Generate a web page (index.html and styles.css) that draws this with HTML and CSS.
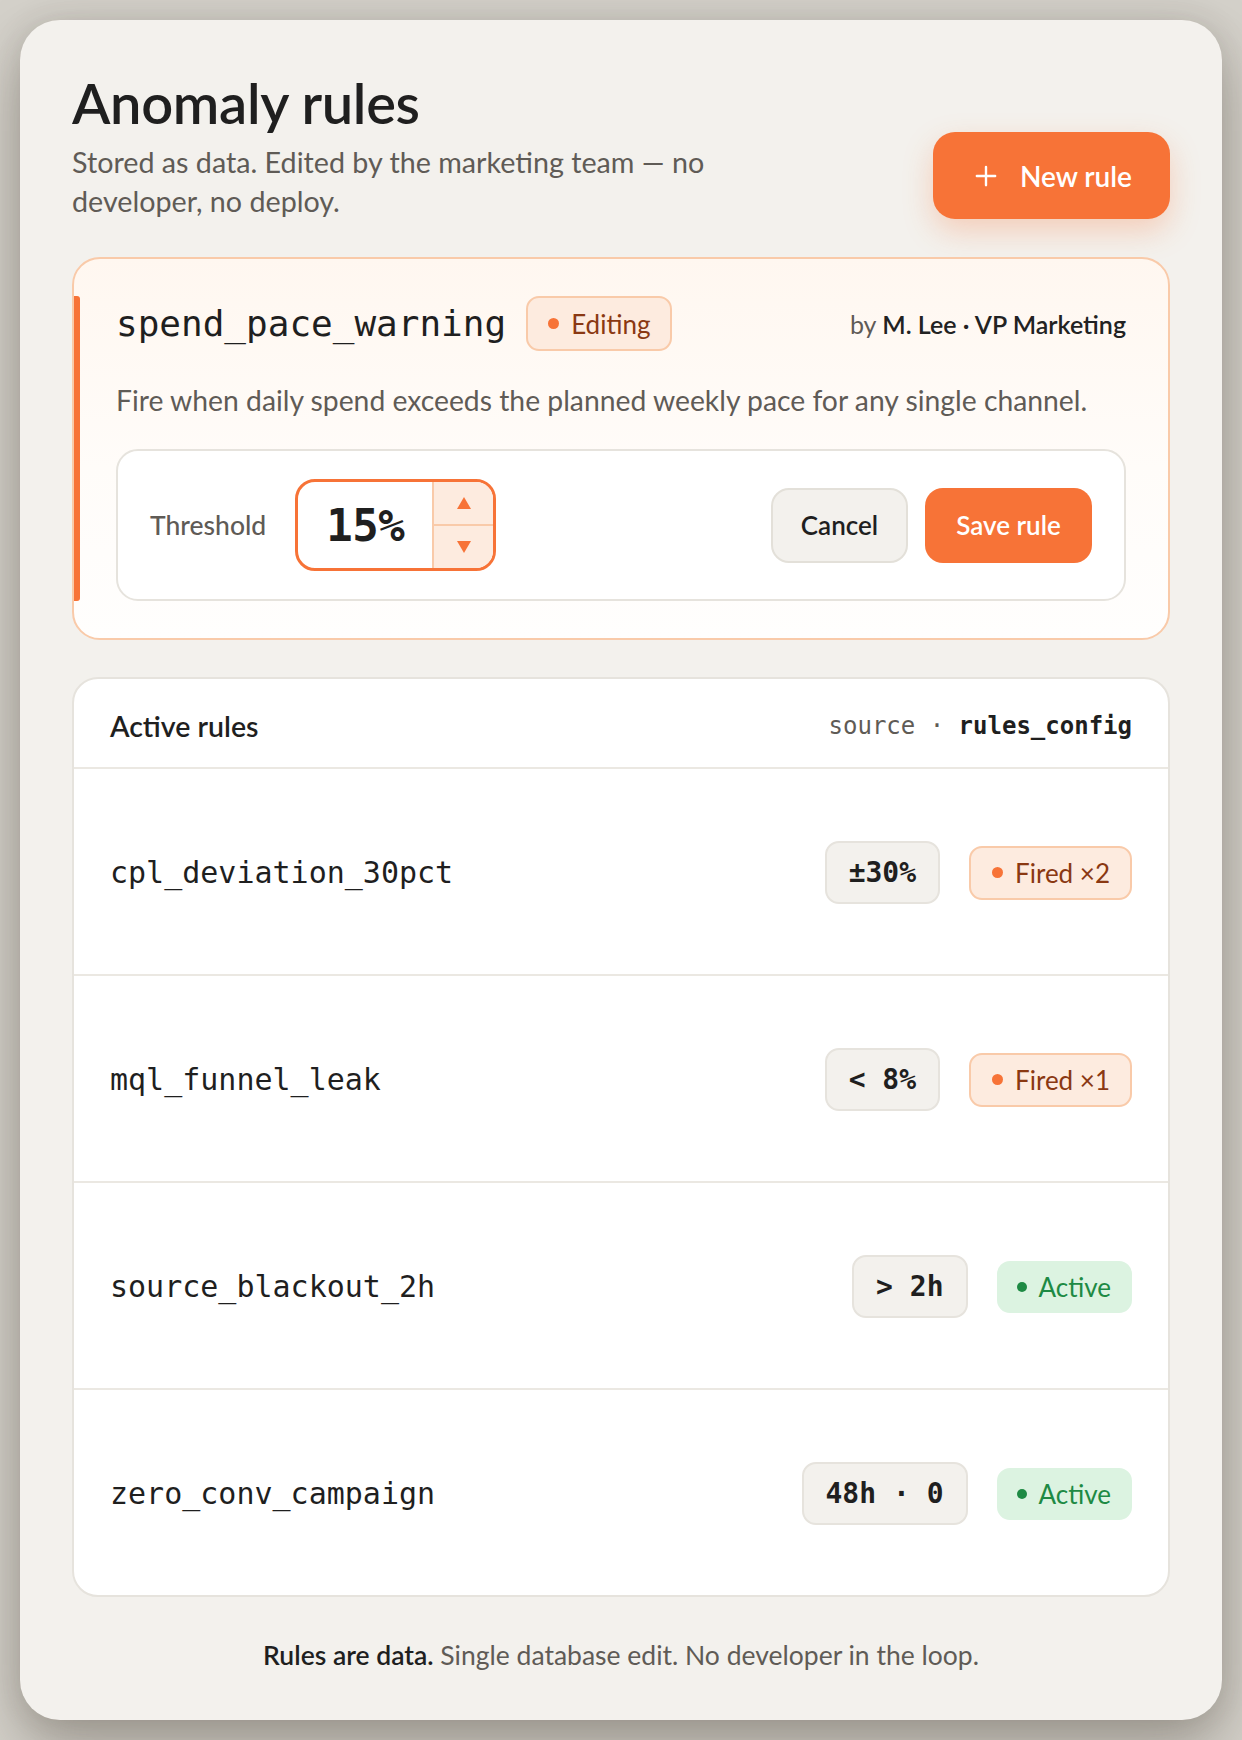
FILE: index.html
```html
<!DOCTYPE html>
<html lang="en">
<head>
<meta charset="utf-8">
<title>Anomaly rules</title>
<link rel="stylesheet" href="styles.css">
</head>
<body>
<main class="app">
  <header class="header">
    <div class="header-text">
      <h1 class="title">Anomaly rules</h1>
      <p class="subtitle">Stored as data. Edited by the marketing team — no developer, no deploy.</p>
    </div>
    <button class="btn-new" type="button">
      <svg class="plus" viewBox="0 0 24 24" width="22" height="22" aria-hidden="true"><path d="M12 2v20M2 12h20" stroke="#fff" stroke-width="2.6" stroke-linecap="round" fill="none"/></svg>
      <span>New rule</span>
    </button>
  </header>

  <section class="editor">
    <div class="editor-head">
      <span class="rule-name">spend_pace_warning</span>
      <span class="badge badge-editing"><span class="dot dot-orange"></span>Editing</span>
      <span class="byline">by <strong>M. Lee · VP Marketing</strong></span>
    </div>
    <p class="desc">Fire when daily spend exceeds the planned weekly pace for any single channel.</p>
    <div class="threshold-box">
      <span class="threshold-label">Threshold</span>
      <div class="stepper">
        <span class="stepper-value">15%</span>
        <div class="stepper-arrows">
          <span class="arrow"><svg viewBox="0 0 14 12" width="14" height="12" aria-hidden="true"><path d="M7 0L14 12H0Z" fill="#f77337"/></svg></span>
          <span class="arrow"><svg viewBox="0 0 14 12" width="14" height="12" aria-hidden="true"><path d="M0 0H14L7 12Z" fill="#f77337"/></svg></span>
        </div>
      </div>
      <div class="actions">
        <button class="btn btn-cancel" type="button">Cancel</button>
        <button class="btn btn-save" type="button">Save rule</button>
      </div>
    </div>
  </section>

  <section class="list">
    <div class="list-head">
      <span class="list-title">Active rules</span>
      <span class="source"><span class="source-key">source</span> · <strong>rules_config</strong></span>
    </div>
    <div class="row">
      <span class="row-name">cpl_deviation_30pct</span>
      <div class="row-tags">
        <span class="code">±30%</span>
        <span class="badge badge-fired"><span class="dot dot-orange"></span>Fired ×2</span>
      </div>
    </div>
    <div class="row">
      <span class="row-name">mql_funnel_leak</span>
      <div class="row-tags">
        <span class="code">&lt; 8%</span>
        <span class="badge badge-fired"><span class="dot dot-orange"></span>Fired ×1</span>
      </div>
    </div>
    <div class="row">
      <span class="row-name">source_blackout_2h</span>
      <div class="row-tags">
        <span class="code">&gt; 2h</span>
        <span class="badge badge-active"><span class="dot dot-green"></span>Active</span>
      </div>
    </div>
    <div class="row">
      <span class="row-name">zero_conv_campaign</span>
      <div class="row-tags">
        <span class="code">48h · 0</span>
        <span class="badge badge-active"><span class="dot dot-green"></span>Active</span>
      </div>
    </div>
  </section>

  <footer class="footer">
    <p class="footer-text"><strong>Rules are data.</strong> Single database edit. No developer in the loop.</p>
  </footer>
</main>
</body>
</html>
```

FILE: styles.css
```css
* { box-sizing: border-box; }

html, body {
  margin: 0;
}

body {
  padding: 20px;
  background: #d4d1ca;
  font-family: "Lato", "Noto Sans", sans-serif;
  color: #1f1f1f;
}

.app {
  display: flex;
  flex-direction: column;
  background: #f3f1ed;
  border-radius: 40px;
  padding: 55px 52px 0;
  box-shadow: 0 28px 60px rgba(60, 52, 40, 0.35), 0 0 30px rgba(60, 52, 40, 0.12);
  min-height: 1700px;
}

/* Header */
.header {
  display: flex;
  justify-content: space-between;
  align-items: flex-end;
}

.title {
  margin: 0;
  font-size: 56px;
  line-height: 55px;
  font-weight: 600;
  letter-spacing: -0.3px;
  color: #1f1f1f;
}

.subtitle {
  margin: 13px 0 0;
  max-width: 680px;
  font-size: 28.7px;
  line-height: 39px;
  color: #5f5b56;
}

.btn-new {
  display: flex;
  align-items: center;
  gap: 23px;
  height: 87px;
  padding: 0 38px 0 42px;
  border: none;
  border-radius: 22px;
  background: #f77337;
  color: #fff;
  font-family: inherit;
  font-size: 28px;
  font-weight: 600;
  box-shadow: 0 12px 30px rgba(247, 115, 55, 0.28);
  margin-bottom: 2px;
}

/* Editor card */
.editor {
  position: relative;
  margin-top: 36px;
  border: 2px solid #f9caa9;
  border-radius: 28px;
  padding: 37px 42px 37px;
  background: linear-gradient(180deg, #fff7f0 0%, #fffcf9 55%, #fffefd 100%);
}

.editor::before {
  content: "";
  position: absolute;
  left: 0;
  top: 37px;
  bottom: 37px;
  width: 6px;
  border-radius: 0 3px 3px 0;
  background: #f77337;
}

.editor-head {
  display: flex;
  align-items: center;
  height: 55px;
}

.rule-name {
  font-family: "DejaVu Sans Mono", monospace;
  font-size: 36px;
  color: #1f1f1f;
}

.badge {
  display: inline-flex;
  align-items: center;
  gap: 12px;
  border-radius: 13px;
  border: 2px solid transparent;
  font-size: 26px;
  white-space: nowrap;
}

.badge-editing {
  margin-left: 20px;
  height: 55px;
  padding: 0 20px 0 20px;
  background: #fdebdf;
  border-color: #f9caa9;
  color: #8a3812;
}

.dot {
  width: 11px;
  height: 11px;
  border-radius: 50%;
  flex: none;
}

.dot-orange { background: #f77337; }
.dot-green { background: #1e8a44; width: 10px; height: 10px; }

.byline {
  margin-left: auto;
  font-size: 25px;
  color: #5f5b56;
}

.byline strong {
  font-weight: 600;
  color: #222;
}

.desc {
  margin: 30px 0 30px;
  font-size: 28.3px;
  line-height: 38px;
  color: #5f5b56;
}

.threshold-box {
  display: flex;
  align-items: center;
  background: #fff;
  border: 2px solid #e6e3dd;
  border-radius: 22px;
  padding: 28px 32px;
}

.threshold-label {
  font-size: 26.5px;
  font-weight: 500;
  color: #5f5b56;
  margin-right: 29px;
}

.stepper {
  display: flex;
  width: 201px;
  height: 92px;
  border: 3px solid #f77337;
  border-radius: 20px;
  overflow: hidden;
  background: #fff;
}

.stepper-value {
  flex: 1;
  display: flex;
  align-items: center;
  justify-content: center;
  font-family: "DejaVu Sans Mono", monospace;
  font-weight: 700;
  font-size: 44px;
  color: #1f1f1f;
  letter-spacing: -0.5px;
}

.stepper-arrows {
  width: 61px;
  display: flex;
  flex-direction: column;
  background: #fdebdf;
  border-left: 2px solid #f9caa9;
}

.arrow {
  flex: 1;
  display: flex;
  align-items: center;
  justify-content: center;
}

.arrow + .arrow {
  border-top: 2px solid #f9caa9;
}

.actions {
  margin-left: auto;
  display: flex;
  gap: 17px;
}

.btn {
  height: 75px;
  border-radius: 18px;
  font-family: inherit;
  font-size: 26px;
  font-weight: 600;
}

.btn-cancel {
  width: 137px;
  background: #f3f1ed;
  border: 2px solid #e3e0d9;
  color: #1f1f1f;
}

.btn-save {
  width: 167px;
  background: #f77337;
  border: none;
  color: #fff;
}

/* Active rules list */
.list {
  margin-top: 37px;
  background: #fff;
  border: 2px solid #e6e3dd;
  border-radius: 26px;
  overflow: hidden;
}

.list-head {
  display: flex;
  align-items: center;
  justify-content: space-between;
  height: 90px;
  padding: 5px 36px 0 36px;
  border-bottom: 2px solid #ebe8e2;
}

.list-title {
  font-size: 28.5px;
  font-weight: 600;
  color: #1f1f1f;
}

.source {
  font-family: "DejaVu Sans Mono", monospace;
  font-size: 24px;
  color: #5f5b56;
}

.source strong {
  font-weight: 700;
  color: #1f1f1f;
}

.row {
  display: flex;
  align-items: center;
  justify-content: space-between;
  height: 207px;
  padding: 2px 36px 0 36px;
  border-bottom: 2px solid #ebe8e2;
}

.row:last-child {
  border-bottom: none;
  height: 205px;
}

.row-name {
  font-family: "DejaVu Sans Mono", monospace;
  font-size: 30px;
  color: #1f1f1f;
}

.row-tags {
  display: flex;
  align-items: center;
  gap: 29px;
}

.code {
  display: inline-flex;
  align-items: center;
  height: 63px;
  padding: 0 22px;
  background: #f3f1ed;
  border: 2px solid #e6e3dd;
  border-radius: 14px;
  font-family: "DejaVu Sans Mono", monospace;
  font-weight: 700;
  font-size: 28px;
  color: #1f1f1f;
}

.badge-fired {
  height: 54px;
  padding: 0 20px 0 21px;
  background: #fdebdf;
  border-color: #f9caa9;
  color: #8a3812;
}

.badge-active {
  height: 52px;
  padding: 0 19px 0 18px;
  background: #dcf3e1;
  border-color: #dcf3e1;
  color: #1e8a44;
}

.footer {
  flex: 1;
  display: flex;
  align-items: center;
  justify-content: center;
  padding-bottom: 7px;
}

.footer-text {
  margin: 0;
  font-size: 26.5px;
  line-height: 36px;
  color: #5f5b56;
}

.footer-text strong {
  font-weight: 600;
  color: #1f1f1f;
}
```
